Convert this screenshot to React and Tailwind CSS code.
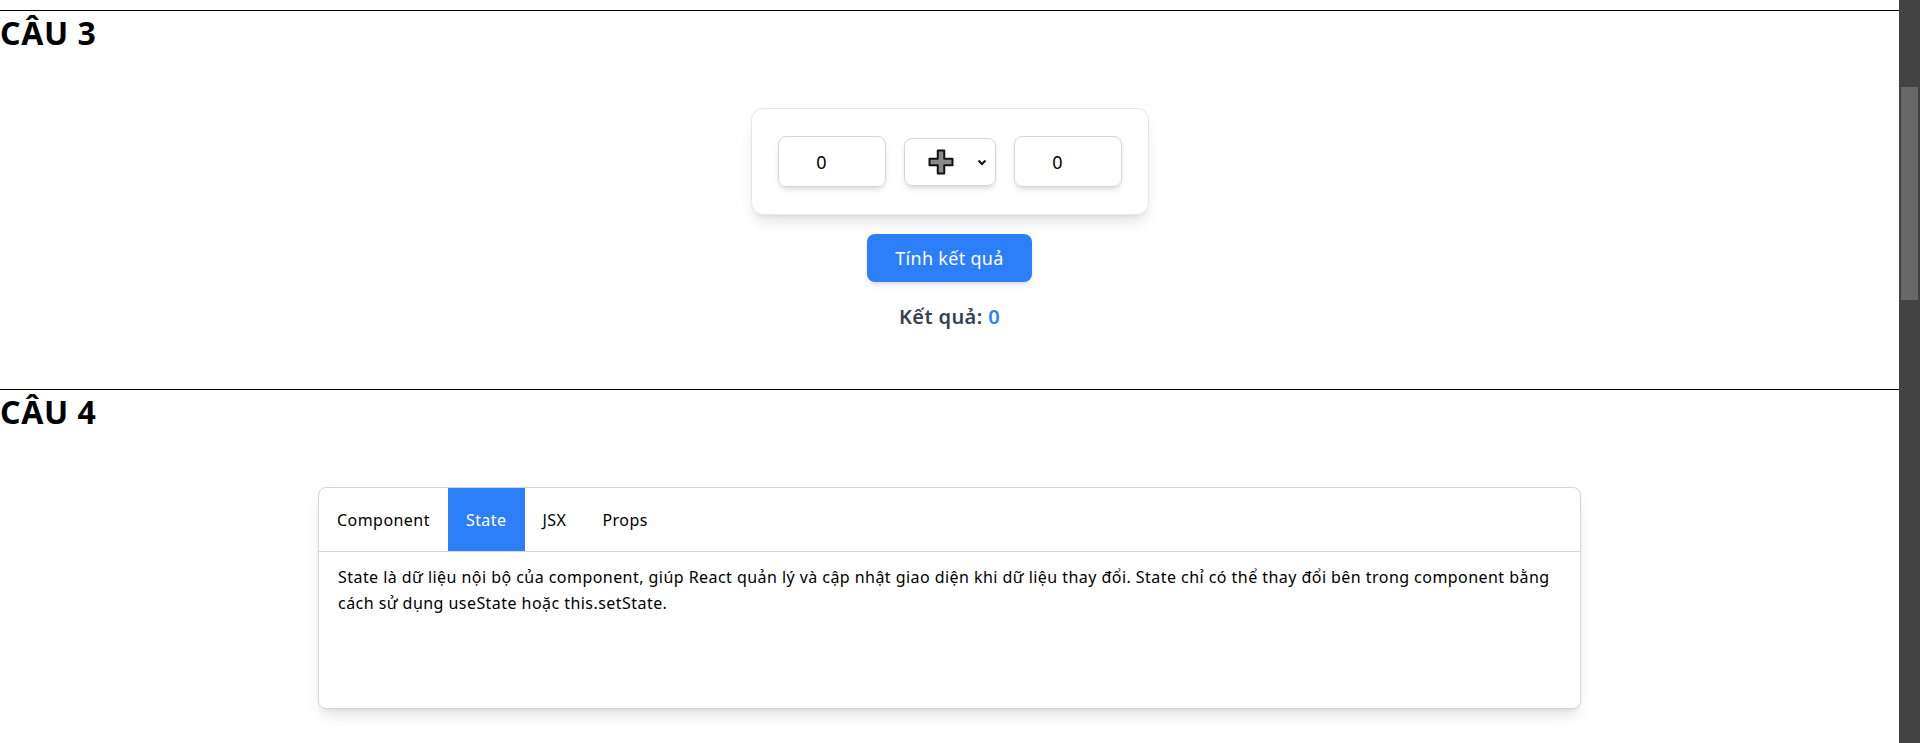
import { useState } from "react";

const tabs = [
  {
    key: "Component",
    text: "Component là khối xây dựng cơ bản của ứng dụng React, giúp chia giao diện thành các phần nhỏ có thể tái sử dụng.",
  },
  {
    key: "State",
    text: "State là dữ liệu nội bộ của component, giúp React quản lý và cập nhật giao diện khi dữ liệu thay đổi. State chỉ có thể thay đổi bên trong component bằng cách sử dụng useState hoặc this.setState.",
  },
  {
    key: "JSX",
    text: "JSX là cú pháp mở rộng của JavaScript, cho phép viết mã giống HTML bên trong JavaScript.",
  },
  {
    key: "Props",
    text: "Props là dữ liệu được truyền từ component cha xuống component con và không thể thay đổi bên trong component con.",
  },
];

const PlusIcon = () => (
  <svg width="26" height="26" viewBox="0 0 26 26">
    <path
      d="M9.75 1.5h6.5v8.25h8.25v6.5h-8.25v8.25h-6.5v-8.25H1.5v-6.5h8.25z"
      fill="#8a8a8a"
      stroke="#111"
      strokeWidth="2"
      strokeLinejoin="round"
    />
  </svg>
);

const Calculator = () => {
  const [a, setA] = useState("0");
  const [b, setB] = useState("0");
  const [result, setResult] = useState(0);

  return (
    <div className="flex flex-col items-center">
      {/* box nhập số */}
      <div className="mt-[55px] flex items-center gap-[18px] rounded-xl border border-gray-200 bg-white px-[26px] py-[27px] shadow-lg">
        <input
          value={a}
          onChange={(e) => setA(e.target.value)}
          className="h-[51px] w-[108px] rounded-lg border border-gray-300 pr-[20px] text-center text-[18px] shadow-md outline-none"
        />
        <div className="relative flex h-[48px] w-[92px] items-center rounded-lg border border-gray-300 shadow-md">
          <span className="ml-[23px] flex">
            <PlusIcon />
          </span>
          <svg className="absolute right-[8px] top-[20px]" width="10" height="7" viewBox="0 0 10 7">
            <path d="M1.5 1.5 5 5l3.5-3.5" fill="none" stroke="#111" strokeWidth="2" />
          </svg>
        </div>
        <input
          value={b}
          onChange={(e) => setB(e.target.value)}
          className="h-[51px] w-[108px] rounded-lg border border-gray-300 pr-[20px] text-center text-[18px] shadow-md outline-none"
        />
      </div>

      <button
        onClick={() => setResult(Number(a) + Number(b))}
        className="mt-[19px] h-[48px] w-[165px] rounded-lg bg-[#2d7ff9] text-[18px] tracking-[0.3px] text-white shadow-md"
      >
        Tính kết quả
      </button>

      <p className="mt-[21px] text-[20px] leading-[28px] font-semibold tracking-[0.4px] text-[#374151]">
        Kết quả: <span className="text-[#2d7ff9]">{result}</span>
      </p>
    </div>
  );
};

const Tabs = () => {
  const [active, setActive] = useState("State");
  const current = tabs.find((t) => t.key === active);

  return (
    <div className="mt-[55px] flex justify-center">
      <div className="h-[222px] w-[1263px] overflow-hidden rounded-lg border border-gray-300 bg-white shadow-lg">
        <div className="flex h-[64px] border-b border-gray-300">
          {tabs.map((t) => (
            <button
              key={t.key}
              onClick={() => setActive(t.key)}
              className={
                t.key === active
                  ? "h-[63px] bg-[#2d7ff9] px-[18px] text-[16px] tracking-[0.45px] text-white"
                  : "h-[63px] px-[18px] text-[16px] tracking-[0.45px] text-black"
              }
            >
              {t.key}
            </button>
          ))}
        </div>
        <div className="px-[19px] pt-[12px] text-[16px] leading-[26px] tracking-[0.45px] text-black">
          {current.text}
        </div>
      </div>
    </div>
  );
};

export default function App() {
  return (
    <div className="flex h-[743px] w-[1920px] overflow-hidden bg-white font-['Noto_Sans',sans-serif] text-black">
      <main className="flex-1 pt-[10px]">
        <section className="h-[379px] border-t border-black">
          <h2 className="pt-[2px] text-[32px] leading-[40px] font-bold tracking-[0.6px]">CÂU 3</h2>
          <Calculator />
        </section>

        <section className="border-t border-black">
          <h2 className="pt-[2px] text-[32px] leading-[40px] font-bold tracking-[0.6px]">CÂU 4</h2>
          <Tabs />
        </section>
      </main>

      {/* thanh cuộn */}
      <div className="w-[21px] bg-[#424242] px-[2px] pt-[87px]">
        <div className="h-[213px] bg-[#686868]" />
      </div>
    </div>
  );
}
